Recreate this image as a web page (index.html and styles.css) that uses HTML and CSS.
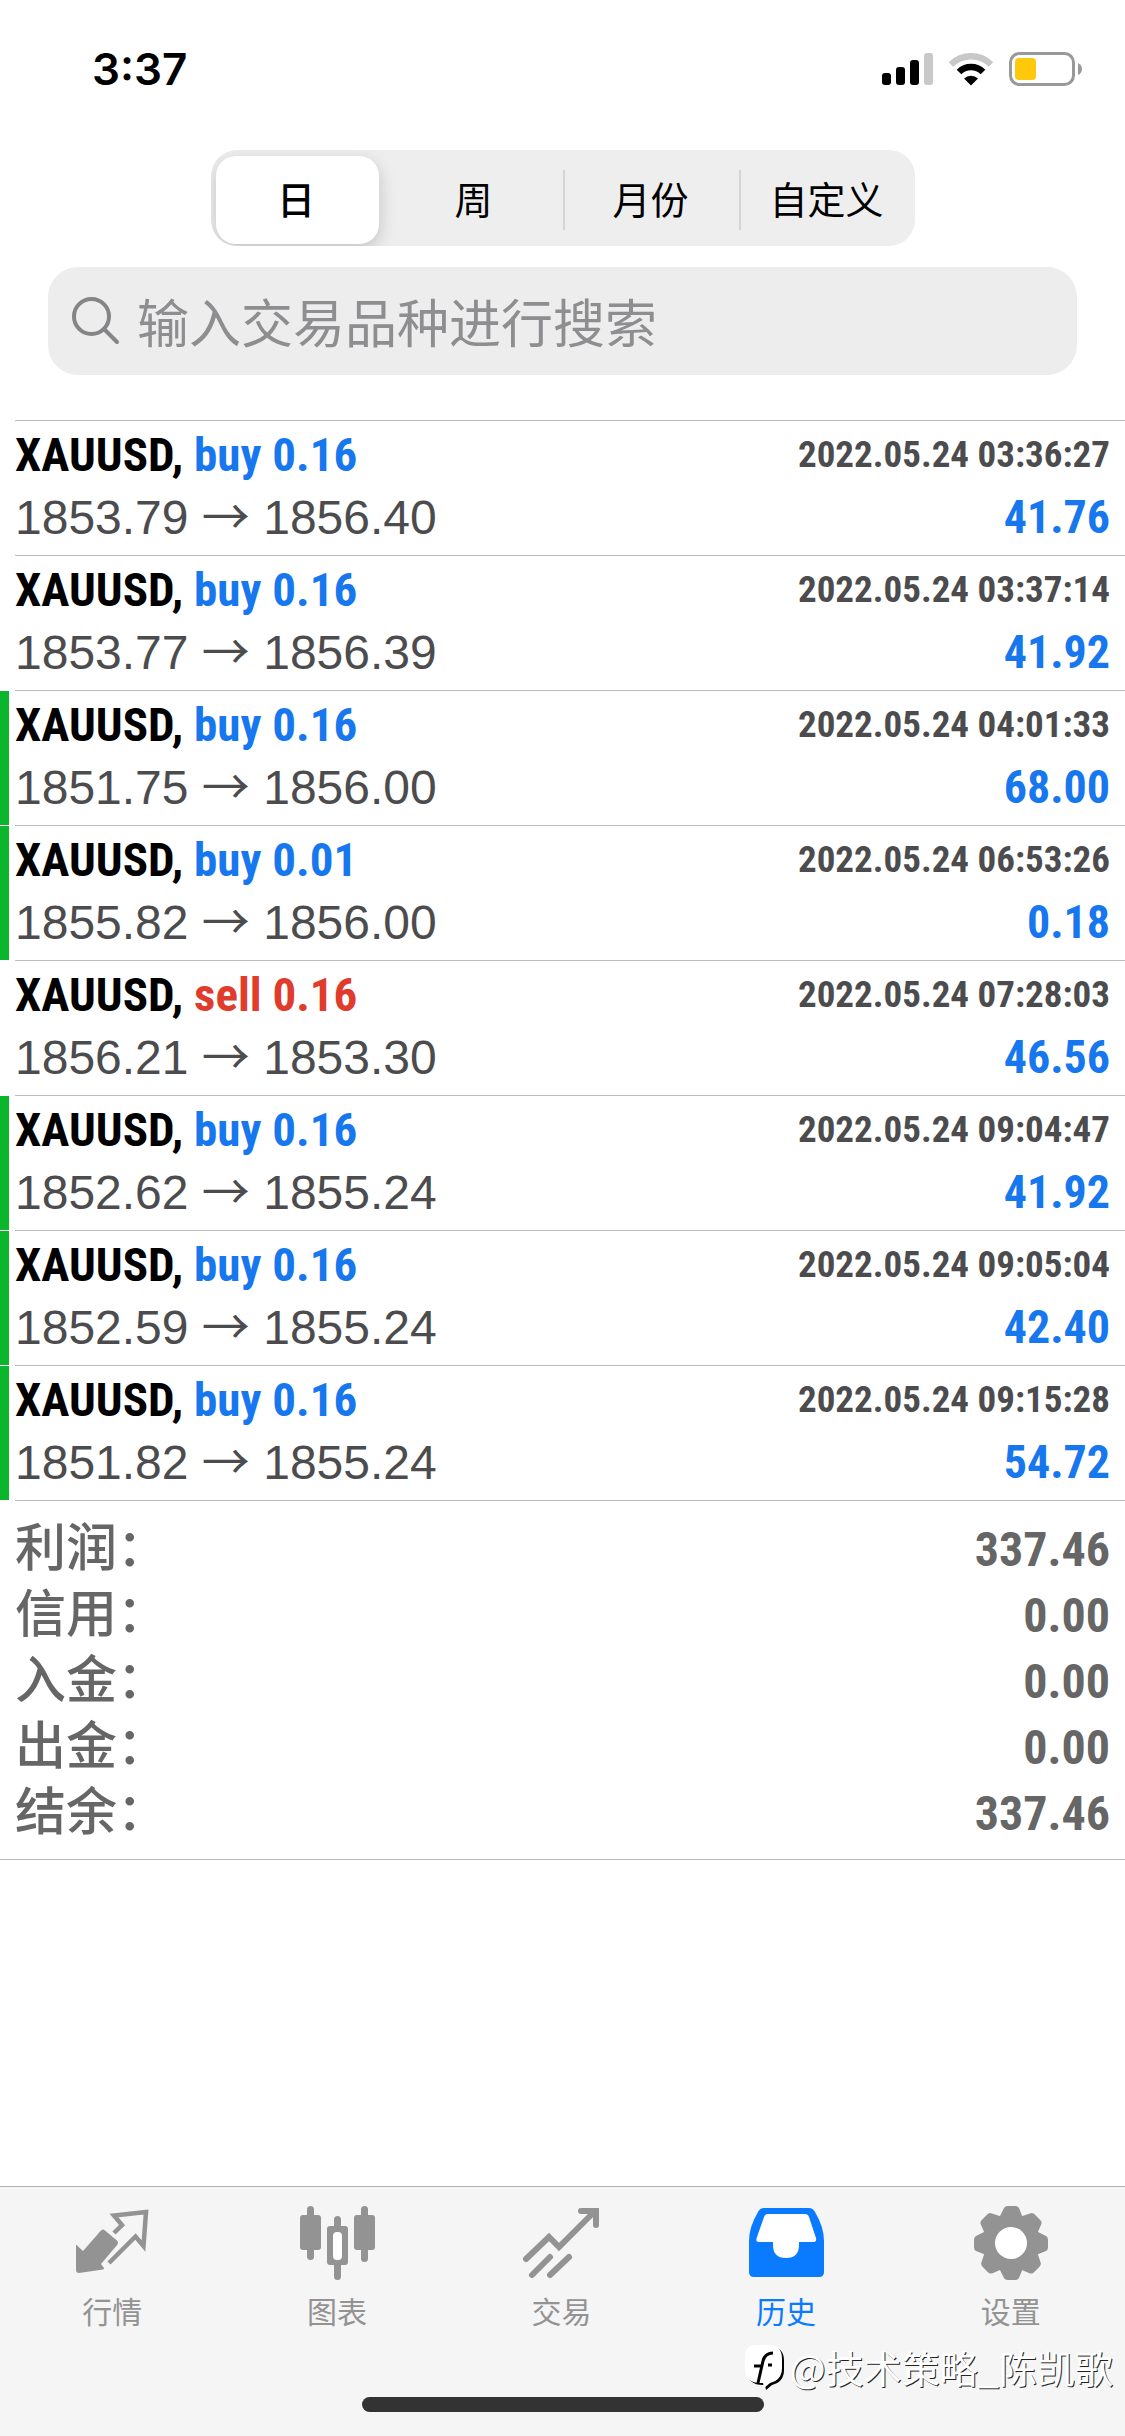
FILE: index.html
```html
<!DOCTYPE html>
<html lang="zh-CN">
<head>
<meta charset="utf-8">
<meta name="viewport" content="width=device-width, initial-scale=1">
<title>历史</title>
<link rel="stylesheet" href="styles.css">
</head>
<body>
<div class="status">
  <time class="clock">3:37</time>
  <div class="status-icons">
    <svg class="signal" viewBox="0 0 51 34" aria-hidden="true">
      <rect x="0" y="21" width="9" height="12" rx="3"/>
      <rect x="14" y="15" width="9" height="18" rx="3"/>
      <rect x="28" y="8" width="9" height="25" rx="3"/>
      <rect x="42" y="1" width="9" height="32" rx="3" fill="#c8c8c8"/>
    </svg>
    <svg class="wifi" viewBox="0 0 46 34" aria-hidden="true">
      <path d="M3 12.500A28.500 28.500 0 0 1 43 12.500" fill="none" stroke="#c8c8c8" stroke-width="6.500"/>
      <path d="M11 21A17 17 0 0 1 35 21" transform="translate(0 -1)" fill="none" stroke="#000" stroke-width="6.500"/>
      <path d="M16 26.500a10 10 0 0 1 14 0L23 33.500z"/>
    </svg>
    <svg class="battery" viewBox="0 0 74 34" aria-hidden="true">
      <rect x="1.500" y="1.500" width="63" height="31" rx="9" fill="none" stroke="#999" stroke-width="3"/>
      <rect x="6" y="6" width="21" height="22" rx="4" fill="#ffc80a"/>
      <path d="M69 11q4 2 4 6t-4 6z" fill="#999"/>
    </svg>
  </div>
</div>

<header class="filters">
  <div class="segments">
    <button class="segment selected" type="button">日</button>
    <button class="segment" type="button">周</button>
    <button class="segment divided" type="button">月份</button>
    <button class="segment divided" type="button">自定义</button>
  </div>
  <label class="search">
    <svg class="search-icon" viewBox="0 0 48 48" aria-hidden="true">
      <circle cx="19.500" cy="19.500" r="17.500"/>
      <path d="M32 32L45 45"/>
    </svg>
    <input class="search-input" type="search" placeholder="输入交易品种进行搜索" aria-label="输入交易品种进行搜索">
  </label>
</header>

<main class="content">
  <ul class="deals">
    <li class="deal">
      <div class="line"><span class="symbol">XAUUSD, <span class="buy">buy 0.16</span></span><time class="date">2022.05.24 03:36:27</time></div>
      <div class="line"><span class="price">1853.79 <span class="arrow">→</span> 1856.40</span><span class="profit">41.76</span></div>
    </li>
    <li class="deal">
      <div class="line"><span class="symbol">XAUUSD, <span class="buy">buy 0.16</span></span><time class="date">2022.05.24 03:37:14</time></div>
      <div class="line"><span class="price">1853.77 <span class="arrow">→</span> 1856.39</span><span class="profit">41.92</span></div>
    </li>
    <li class="deal marked">
      <div class="line"><span class="symbol">XAUUSD, <span class="buy">buy 0.16</span></span><time class="date">2022.05.24 04:01:33</time></div>
      <div class="line"><span class="price">1851.75 <span class="arrow">→</span> 1856.00</span><span class="profit">68.00</span></div>
    </li>
    <li class="deal marked">
      <div class="line"><span class="symbol">XAUUSD, <span class="buy">buy 0.01</span></span><time class="date">2022.05.24 06:53:26</time></div>
      <div class="line"><span class="price">1855.82 <span class="arrow">→</span> 1856.00</span><span class="profit">0.18</span></div>
    </li>
    <li class="deal">
      <div class="line"><span class="symbol">XAUUSD, <span class="sell">sell 0.16</span></span><time class="date">2022.05.24 07:28:03</time></div>
      <div class="line"><span class="price">1856.21 <span class="arrow">→</span> 1853.30</span><span class="profit">46.56</span></div>
    </li>
    <li class="deal marked">
      <div class="line"><span class="symbol">XAUUSD, <span class="buy">buy 0.16</span></span><time class="date">2022.05.24 09:04:47</time></div>
      <div class="line"><span class="price">1852.62 <span class="arrow">→</span> 1855.24</span><span class="profit">41.92</span></div>
    </li>
    <li class="deal marked">
      <div class="line"><span class="symbol">XAUUSD, <span class="buy">buy 0.16</span></span><time class="date">2022.05.24 09:05:04</time></div>
      <div class="line"><span class="price">1852.59 <span class="arrow">→</span> 1855.24</span><span class="profit">42.40</span></div>
    </li>
    <li class="deal marked">
      <div class="line"><span class="symbol">XAUUSD, <span class="buy">buy 0.16</span></span><time class="date">2022.05.24 09:15:28</time></div>
      <div class="line"><span class="price">1851.82 <span class="arrow">→</span> 1855.24</span><span class="profit">54.72</span></div>
    </li>
  </ul>
  <dl class="summary">
    <div class="total"><dt>利润：</dt><dd>337.46</dd></div>
    <div class="total"><dt>信用：</dt><dd>0.00</dd></div>
    <div class="total"><dt>入金：</dt><dd>0.00</dd></div>
    <div class="total"><dt>出金：</dt><dd>0.00</dd></div>
    <div class="total"><dt>结余：</dt><dd>337.46</dd></div>
  </dl>
</main>

<footer class="footer">
  <nav class="tabs">
    <a class="tab" href="#quotes">
      <svg class="tab-icon" viewBox="0 0 78 78" aria-hidden="true">
        <path d="M3 39.500L10 46 28 25.500q2-2 4 0L44.500 36q1 2 0 3.500L28 59l3 4q0 1-1 1.500L6 68q-3 0-3-3z" fill="currentColor"/>
        <path d="M41 28L49 20 41 10.500 73 7 70.500 41 62.500 31.500 36 58" fill="none" stroke="currentColor" stroke-width="4.500"/>
      </svg>
      <span>行情</span>
    </a>
    <a class="tab" href="#charts">
      <svg class="tab-icon" viewBox="0 0 78 78" aria-hidden="true">
        <g fill="currentColor">
          <rect x="2" y="10" width="21" height="35" rx="3"/><rect x="9" y="1" width="7" height="54" rx="3.500"/>
          <rect x="56" y="10" width="21" height="35" rx="3"/><rect x="63" y="1" width="7" height="56" rx="3.500"/>
          <rect x="29" y="21" width="21" height="39" rx="3"/><rect x="36" y="11" width="7" height="64" rx="3.500"/>
        </g>
        <rect x="35" y="27" width="9" height="28" rx="4" fill="#fff"/>
      </svg>
      <span>图表</span>
    </a>
    <a class="tab" href="#trade">
      <svg class="tab-icon" viewBox="0 0 78 78" aria-hidden="true" fill="none" stroke="currentColor" stroke-width="6" stroke-linecap="round">
        <path d="M4 54L27 32 37 42 72 7"/>
        <path d="M59 6H74V20" stroke-linejoin="miter"/>
        <path d="M10 70L28 52M28 70L47 52"/>
      </svg>
      <span>交易</span>
    </a>
    <a class="tab active" href="#history" aria-current="page">
      <svg class="tab-icon" viewBox="0 0 78 78" aria-hidden="true">
        <path d="M17 3H62q4 0 6 4Q77 22 77 36V67q0 5-5 5H7q-5 0-5-5V36Q2 22 11 7q2-4 6-4z" fill="currentColor"/>
        <path d="M21 9H58q3 0 4 3L69 33q1 4-3 4H52v3q0 13-13 13T26 40V37H12q-4 0-2-5L17 12q1-3 4-3z" fill="#fff"/>
      </svg>
      <span>历史</span>
    </a>
    <a class="tab" href="#settings">
      <svg class="tab-icon" viewBox="0 0 78 78" aria-hidden="true">
        <g fill="currentColor">
          <circle cx="39" cy="38" r="29"/>
          <path id="tooth" d="M27 13L32 3Q33 1 36 1H43Q46 1 47 3L51 13V63L47 73Q46 75 43 75H36Q33 75 32 73L27 63z"/>
          <use href="#tooth" transform="rotate(45 39 38)"/>
          <use href="#tooth" transform="rotate(90 39 38)"/>
          <use href="#tooth" transform="rotate(135 39 38)"/>
        </g>
        <circle cx="39" cy="38" r="16" fill="#fff"/>
      </svg>
      <span>设置</span>
    </a>
  </nav>
  <div class="home-bar"></div>
  <div class="watermark">
    <svg class="watermark-logo" viewBox="0 0 42 48" aria-hidden="true">
      <path d="M14 4H27Q40 4 40 18V27Q40 39 28 42L22 47 21 42Q4 43 3 28V16Q3 4 14 4z" fill="#000"/>
      <path d="M12 2H25Q38 2 38 16V25Q38 37 26 40L20 45 19 40Q1 41 1 26V14Q1 2 12 2z" fill="#fff"/>
      <path d="M14 40L19 18Q21 10 29 10M10 23H19M24 22H28" fill="none" stroke="#000" stroke-width="3"/>
    </svg>
    <span>@技术策略_陈凯歌</span>
  </div>
</footer>
</body>
</html>
```
FILE: styles.css
```css
* {
  box-sizing: border-box;
}

body {
  margin: 0;
  min-height: 100vh;
  display: flex;
  flex-direction: column;
  background: #fff;
  color: #000;
  font-family: "Liberation Sans", "Noto Sans CJK SC", sans-serif;
}

.status {
  display: flex;
  align-items: center;
  justify-content: space-between;
  height: 138px;
  padding: 0 42px 0 92px;
}

.clock {
  font: 600 44px/56px Inter, "Liberation Sans", sans-serif;
}

.status-icons {
  display: flex;
  align-items: center;
  gap: 15px;
}

.signal {
  width: 51px;
  height: 34px;
}

.wifi {
  width: 46px;
  height: 34px;
}

.battery {
  width: 74px;
  height: 34px;
}

.filters {
  display: flex;
  flex-direction: column;
  align-items: center;
  gap: 21px;
  padding: 12px 48px 45px;
}

.segments {
  display: grid;
  grid-template-columns: repeat(4, 1fr);
  width: 704px;
  max-width: 100%;
  height: 96px;
  border-radius: 26px;
  background: #eee;
  overflow: hidden;
}

.segment {
  display: flex;
  align-items: center;
  justify-content: center;
  margin: 20px 0;
  padding: 0 2px 4px 0;
  border: 0;
  background: none;
  color: #000;
  font: 400 38px/56px "Noto Sans CJK SC", sans-serif;
}

.segment.divided {
  border-left: 2px solid #d4d4d5;
}

.segment.selected {
  margin: 6px 8px 6px 5px;
  border-radius: 20px;
  background: #fff;
  box-shadow: 0 6px 18px rgba(0, 0, 0, 0.18);
  font-weight: 500;
}

.search {
  display: flex;
  align-items: center;
  gap: 17px;
  width: 100%;
  height: 108px;
  padding: 0 24px;
  border-radius: 30px;
  background: #ededee;
}

.search-icon {
  flex: none;
  width: 48px;
  height: 48px;
  fill: none;
  stroke: #858587;
  stroke-width: 4;
  stroke-linecap: round;
}

.search-input {
  flex: 1;
  min-width: 0;
  height: 76px;
  padding: 0;
  border: 0;
  outline: 0;
  background: none;
  color: #000;
  font: 400 52px/76px "Noto Sans CJK SC", sans-serif;
}

.search-input::placeholder {
  color: #8e8e90;
  opacity: 1;
}

.deals {
  margin: 0;
  padding: 0;
  list-style: none;
}

.deal {
  position: relative;
  margin-left: 15px;
  padding: 2px 15px 6px 0;
  border-top: 1px solid #bcbcbe;
}

.deal.marked::before {
  content: "";
  position: absolute;
  left: -15px;
  top: 0;
  bottom: 0;
  width: 9px;
  background: #0bb52c;
}

.line {
  display: flex;
  align-items: center;
  justify-content: space-between;
  height: 63px;
  line-height: 63px;
  white-space: nowrap;
}

.symbol,
.date,
.profit,
.total dd {
  font-family: "Roboto Condensed", "Liberation Sans Narrow", sans-serif;
  font-weight: 700;
}

.symbol {
  font-size: 47px;
}

.price {
  color: #4c4c4e;
  font-size: 48px;
}

.profit {
  font-size: 46px;
}

.date {
  color: #4c4c4e;
  font-size: 37px;
}

.arrow {
  font-family: "Noto Sans CJK SC", sans-serif;
  line-height: 1;
}

.buy,
.profit {
  color: #1777ee;
}

.sell {
  color: #e03c2d;
}

.summary {
  margin: 0;
  padding: 11px 15px 18px;
  border-bottom: 1px solid #bcbcbe;
  position: relative;
}

.summary::before {
  content: "";
  position: absolute;
  top: 0;
  left: 15px;
  right: 0;
  height: 1px;
  background: #bcbcbe;
}

.total {
  display: flex;
  align-items: baseline;
  justify-content: space-between;
  height: 66px;
  color: #666;
  line-height: 66px;
}

.total dt {
  font-family: "Noto Sans CJK SC", sans-serif;
  font-size: 51px;
  font-weight: 500;
}

.total dd {
  margin: 0;
  font-size: 48px;
}

.footer {
  position: relative;
  margin-top: auto;
  padding-bottom: 24px;
  border-top: 1px solid #b0b0b2;
  background: #f5f5f5;
}

.tabs {
  display: grid;
  grid-template-columns: repeat(5, 1fr);
  padding: 18px 2px 63px 0;
}

.tab {
  display: flex;
  flex-direction: column;
  align-items: center;
  gap: 3px;
  color: #939393;
  font: 400 30px/48px "Noto Sans CJK SC", sans-serif;
  text-decoration: none;
}

.tab.active {
  color: #0a7bff;
}

.tab-icon {
  width: 78px;
  height: 78px;
}

.home-bar {
  width: 402px;
  height: 15px;
  margin: 0 auto;
  border-radius: 8px;
  background: #333;
}

.watermark {
  position: absolute;
  right: 12px;
  bottom: 41px;
  display: flex;
  align-items: center;
  gap: 4px;
  color: #fff;
  font: 400 38px/56px "Noto Sans CJK SC", sans-serif;
  text-shadow: 1px 1px 0 #222;
  white-space: nowrap;
}

.watermark-logo {
  width: 42px;
  height: 48px;
}
```
